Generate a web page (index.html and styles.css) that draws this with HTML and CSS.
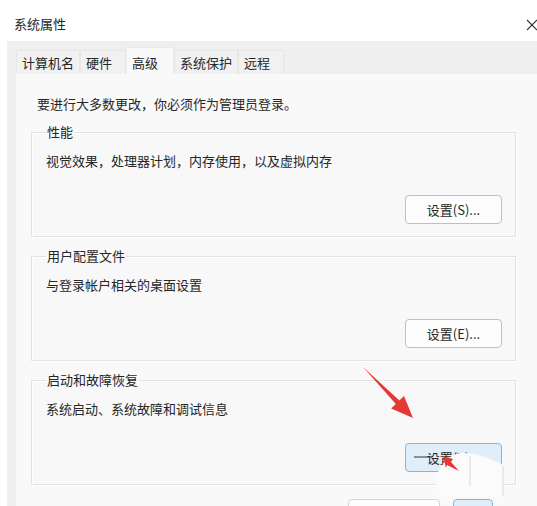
FILE: index.html
```html
<!DOCTYPE html>
<html lang="zh-CN">
<head>
  <meta charset="UTF-8" />
  <title>系统属性</title>
  <link rel="stylesheet" href="styles.css">
</head>
<body>
  <div class="dialog">
    <div class="titlebar">
      <span class="title">系统属性</span>
      <svg class="close" width="11" height="12" viewBox="0 0 11 12">
        <path d="M1 1 L11 11 M11 1 L1 11" stroke="#333" stroke-width="1.1" fill="none"/>
      </svg>
    </div>

    <div class="frame">
      <div class="tabs">
        <div class="tab">计算机名</div>
        <div class="tab">硬件</div>
        <div class="tab active">高级</div>
        <div class="tab">系统保护</div>
        <div class="tab">远程</div>
      </div>

      <div class="panel">
        <p class="note">要进行大多数更改，你必须作为管理员登录。</p>

        <fieldset class="group">
          <legend>性能</legend>
          <p>视觉效果，处理器计划，内存使用，以及虚拟内存</p>
          <div class="group-actions"><button class="btn">设置(S)...</button></div>
        </fieldset>

        <fieldset class="group">
          <legend>用户配置文件</legend>
          <p>与登录帐户相关的桌面设置</p>
          <div class="group-actions"><button class="btn">设置(E)...</button></div>
        </fieldset>

        <fieldset class="group">
          <legend>启动和故障恢复</legend>
          <p>系统启动、系统故障和调试信息</p>
          <div class="group-actions"><button class="btn hot">设置(T)...</button></div>
        </fieldset>

        <div class="footer">
          <button class="btn wide"></button>
          <button class="btn small hot"></button>
        </div>
      </div>
    </div>

    <!-- screenshot markup: red arrows + smear over the last button -->
    <svg class="marks" width="537" height="506" viewBox="0 0 537 506">
      <path d="M441 497 L434 480 C440 466 448 455 460 453 C476 452 492 459 503 465 L503 497 Z" fill="#fbfbfb"/>
      <path d="M470 456 L470 486 M503 466 L503 496" stroke="#d6dde3" stroke-width="1"/>
      <path d="M414 457 L432 457" stroke="#333" stroke-width="1"/>
      <polygon points="363,367 399.4,400.6 404,396 413,418 391.2,408.6 395.8,404" fill="#e53935"/>
      <polygon points="443,456 453,459 451,462 459,471 447,465 446,468" fill="#e53935"/>
    </svg>
  </div>
</body>
</html>
```

FILE: styles.css
```css
* { box-sizing: border-box; margin:0; padding:0; }
html, body { height:100%; overflow:hidden; background:#fff; }
body { font-family:"Noto Sans CJK SC","Noto Sans",sans-serif; font-size:13px; color:#262626; }

.dialog { position:relative; width:537px; height:506px; }

/* —— title bar —— */
.titlebar { display:flex; justify-content:space-between; align-items:center; height:41px; padding:7px 0 0 14px; }
.title { line-height:18px; }
.close { margin-top:1px; }

/* —— tabs + panel —— */
.frame { margin-left:7px; height:465px; background:#efefef; }
.tabs { display:flex; align-items:flex-end; height:33px; padding-left:9px; }
.tab { min-width:46px; height:24px; line-height:23px; padding:0 5px; background:#f1f1f1; border:1px solid #e6e6e6; border-bottom:none; }
.tab.active { height:27px; line-height:29px; min-width:48px; background:#f9f9f9; border-color:#ececec; }

.panel { margin-left:9px; height:432px; background:#f9f9f9; padding:21px 21px 0 15px; }
.note { line-height:18px; margin-left:6px; }

/* —— group boxes —— */
.group { margin-top:10px; border:1px solid #e2e2e2; box-shadow:inset 1px 1px 0 #fff, 1px 1px 0 #fff; padding:0 13px 12px 14px; background:#f8f8f8; }
.group legend { margin-left:0; padding:0 1px; line-height:18px; }
.group p { margin-top:11px; line-height:18px; }
.group-actions { display:flex; justify-content:flex-end; margin-top:25px; }

.btn { width:97px; height:29px; font:inherit; color:#262626; background:#fdfdfd; border:1px solid #b3c3cf; border-radius:4px; }
.btn.hot { background:#e0eef9; border-color:#8fb3cf; }

.footer { display:flex; justify-content:flex-end; gap:13px; margin-top:14px; padding-right:23px; }
.btn.wide { width:92px; border-color:#d3d3d3; }
.btn.small { width:40px; }

/* —— overlay from the screenshot —— */
.marks { position:absolute; top:0; left:0; pointer-events:none; }
```
